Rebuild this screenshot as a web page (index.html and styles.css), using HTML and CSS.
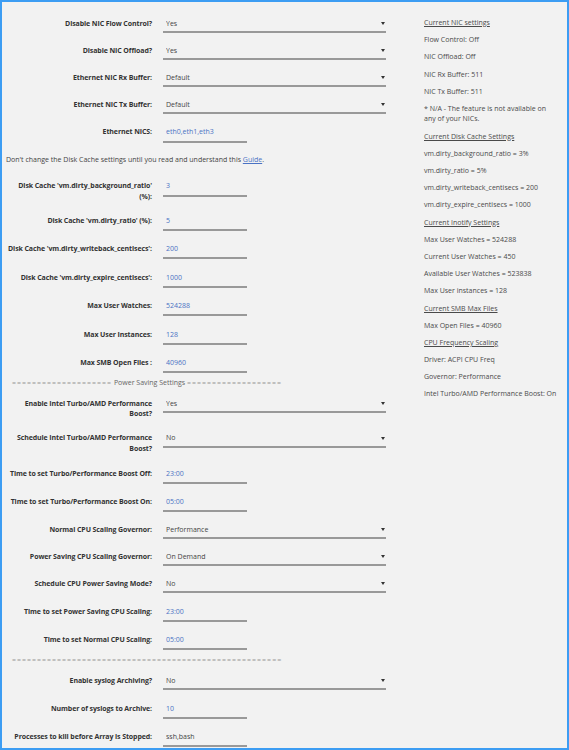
FILE: index.html
```html
<!DOCTYPE html>
<html lang="en">
<head>
  <meta charset="UTF-8" />
  <meta name="viewport" content="width=device-width, initial-scale=1.0"/>
  <title>Tips and Tweaks</title>
  <link rel="stylesheet" href="styles.css">
</head>
<body>

<div class="page">
  <form class="settings">
    <div class="row">
      <label>Disable NIC Flow Control?</label>
      <div class="select"><select><option>Yes</option><option>No</option></select></div>
    </div>
    <div class="row">
      <label>Disable NIC Offload?</label>
      <div class="select"><select><option>Yes</option><option>No</option></select></div>
    </div>
    <div class="row">
      <label>Ethernet NIC Rx Buffer:</label>
      <div class="select"><select><option>Default</option></select></div>
    </div>
    <div class="row">
      <label>Ethernet NIC Tx Buffer:</label>
      <div class="select"><select><option>Default</option></select></div>
    </div>
    <div class="row">
      <label>Ethernet NICS:</label>
      <input type="text" value="eth0,eth1,eth3">
    </div>

    <p class="note">Don't change the Disk Cache settings until you read and understand this <a href="#">Guide</a>.</p>

    <div class="row">
      <label>Disk Cache 'vm.dirty_background_ratio' (%):</label>
      <input type="text" value="3">
    </div>
    <div class="row">
      <label>Disk Cache 'vm.dirty_ratio' (%):</label>
      <input type="text" value="5">
    </div>
    <div class="row">
      <label>Disk Cache 'vm.dirty_writeback_centisecs':</label>
      <input type="text" value="200">
    </div>
    <div class="row">
      <label>Disk Cache 'vm.dirty_expire_centisecs':</label>
      <input type="text" value="1000">
    </div>
    <div class="row">
      <label>Max User Watches:</label>
      <input type="text" value="524288">
    </div>
    <div class="row">
      <label>Max User Instances:</label>
      <input type="text" value="128">
    </div>
    <div class="row">
      <label>Max SMB Open Files :</label>
      <input type="text" value="40960">
    </div>

    <p class="divider"><span class="rule">====================</span> Power Saving Settings <span class="rule">===================</span></p>

    <div class="row">
      <label>Enable Intel Turbo/AMD Performance Boost?</label>
      <div class="select"><select><option>Yes</option><option>No</option></select></div>
    </div>
    <div class="row">
      <label>Schedule Intel Turbo/AMD Performance Boost?</label>
      <div class="select"><select><option>No</option><option>Yes</option></select></div>
    </div>
    <div class="row">
      <label>Time to set Turbo/Performance Boost Off:</label>
      <input type="text" value="23:00">
    </div>
    <div class="row">
      <label>Time to set Turbo/Performance Boost On:</label>
      <input type="text" value="05:00">
    </div>
    <div class="row">
      <label>Normal CPU Scaling Governor:</label>
      <div class="select"><select><option>Performance</option><option>On Demand</option></select></div>
    </div>
    <div class="row">
      <label>Power Saving CPU Scaling Governor:</label>
      <div class="select"><select><option>On Demand</option><option>Performance</option></select></div>
    </div>
    <div class="row">
      <label>Schedule CPU Power Saving Mode?</label>
      <div class="select"><select><option>No</option><option>Yes</option></select></div>
    </div>
    <div class="row">
      <label>Time to set Power Saving CPU Scaling:</label>
      <input type="text" value="23:00">
    </div>
    <div class="row">
      <label>Time to set Normal CPU Scaling:</label>
      <input type="text" value="05:00">
    </div>

    <p class="divider"><span class="rule">======================================================</span></p>

    <div class="row">
      <label>Enable syslog Archiving?</label>
      <div class="select"><select><option>No</option><option>Yes</option></select></div>
    </div>
    <div class="row">
      <label>Number of syslogs to Archive:</label>
      <input type="text" value="10">
    </div>
    <div class="row">
      <label>Processes to kill before Array is Stopped:</label>
      <input type="text" class="plain" value="ssh,bash">
    </div>
  </form>

  <div class="status">
    <p class="head">Current NIC settings</p>
    <p>Flow Control: Off</p>
    <p>NIC Offload: Off</p>
    <p>NIC Rx Buffer: 511</p>
    <p>NIC Tx Buffer: 511</p>
    <p>* N/A - The feature is not available on any of your NICs.</p>
    <p class="head">Current Disk Cache Settings</p>
    <p>vm.dirty_background_ratio = 3%</p>
    <p>vm.dirty_ratio = 5%</p>
    <p>vm.dirty_writeback_centisecs = 200</p>
    <p>vm.dirty_expire_centisecs = 1000</p>
    <p class="head">Current Inotify Settings</p>
    <p>Max User Watches = 524288</p>
    <p>Current User Watches = 450</p>
    <p>Available User Watches = 523838</p>
    <p>Max User instances = 128</p>
    <p class="head">Current SMB Max Files</p>
    <p>Max Open Files = 40960</p>
    <p class="head">CPU Frequency Scaling</p>
    <p>Driver: ACPI CPU Freq</p>
    <p>Governor: Performance</p>
    <p>Intel Turbo/AMD Performance Boost: On</p>
  </div>
</div>

</body>
</html>
```

FILE: styles.css
```css
body {
  margin: 0;
  font-family: 'Open Sans', 'Noto Sans', sans-serif;
  font-size: 7px;
  color: #333;
}
.page {
  display: flex;
  box-sizing: border-box;
  height: 750px;
  padding-top: 13px;
  border: 2px solid #3d9df3;
  background: #f2f2f2;
  overflow: hidden;
}
.settings {
  display: flex;
  flex-direction: column;
  width: 422px;
  flex: none;
  margin: 0;
}
.row {
  display: flex;
  align-items: baseline;
  margin-bottom: 9px;
}
.row label {
  flex: none;
  width: 146px;
  margin: 0 11px 0 4px;
  text-align: right;
  font-weight: bold;
  letter-spacing: -0.1px;
  line-height: 10.5px;
}
/* dropdown labels that wrap need a bit more room below */
.row label:has(+ .select) {
  padding-bottom: 1px;
}
.select {
  position: relative;
}
.select::after {
  content: '';
  position: absolute;
  right: 1px;
  top: 7px;
  border-left: 2px solid transparent;
  border-right: 2px solid transparent;
  border-top: 3px solid #333;
}
select,
input {
  box-sizing: border-box;
  font-family: inherit;
  font-size: 7px;
  margin: 0;
  padding: 0 3px;
  border: none;
  border-bottom: 2px solid #999;
  background: transparent;
  outline: none;
}
select {
  -webkit-appearance: none;
  appearance: none;
  width: 223px;
  height: 18px;
  color: #444;
}
input {
  width: 84px;
  height: 19.5px;
  color: #4a72c4;
}
input.plain {
  color: #444;
}
.note {
  margin: 3px 0 12px 4px;
  line-height: 10.5px;
  color: #444;
}
.note a {
  color: #4a72c4;
}
.divider {
  margin: -4px 0 6.5px 10px;
  line-height: 10.5px;
  color: #666;
  white-space: nowrap;
}
.divider .rule {
  letter-spacing: 1px;
  color: #999;
}
.status {
  flex: 1;
  margin-top: 3px;
  padding-right: 10px;
  color: #4a4a4a;
}
.status p {
  margin: 0 0 6.7px;
  line-height: 10.5px;
}
.status .head {
  text-decoration: underline;
}
```
